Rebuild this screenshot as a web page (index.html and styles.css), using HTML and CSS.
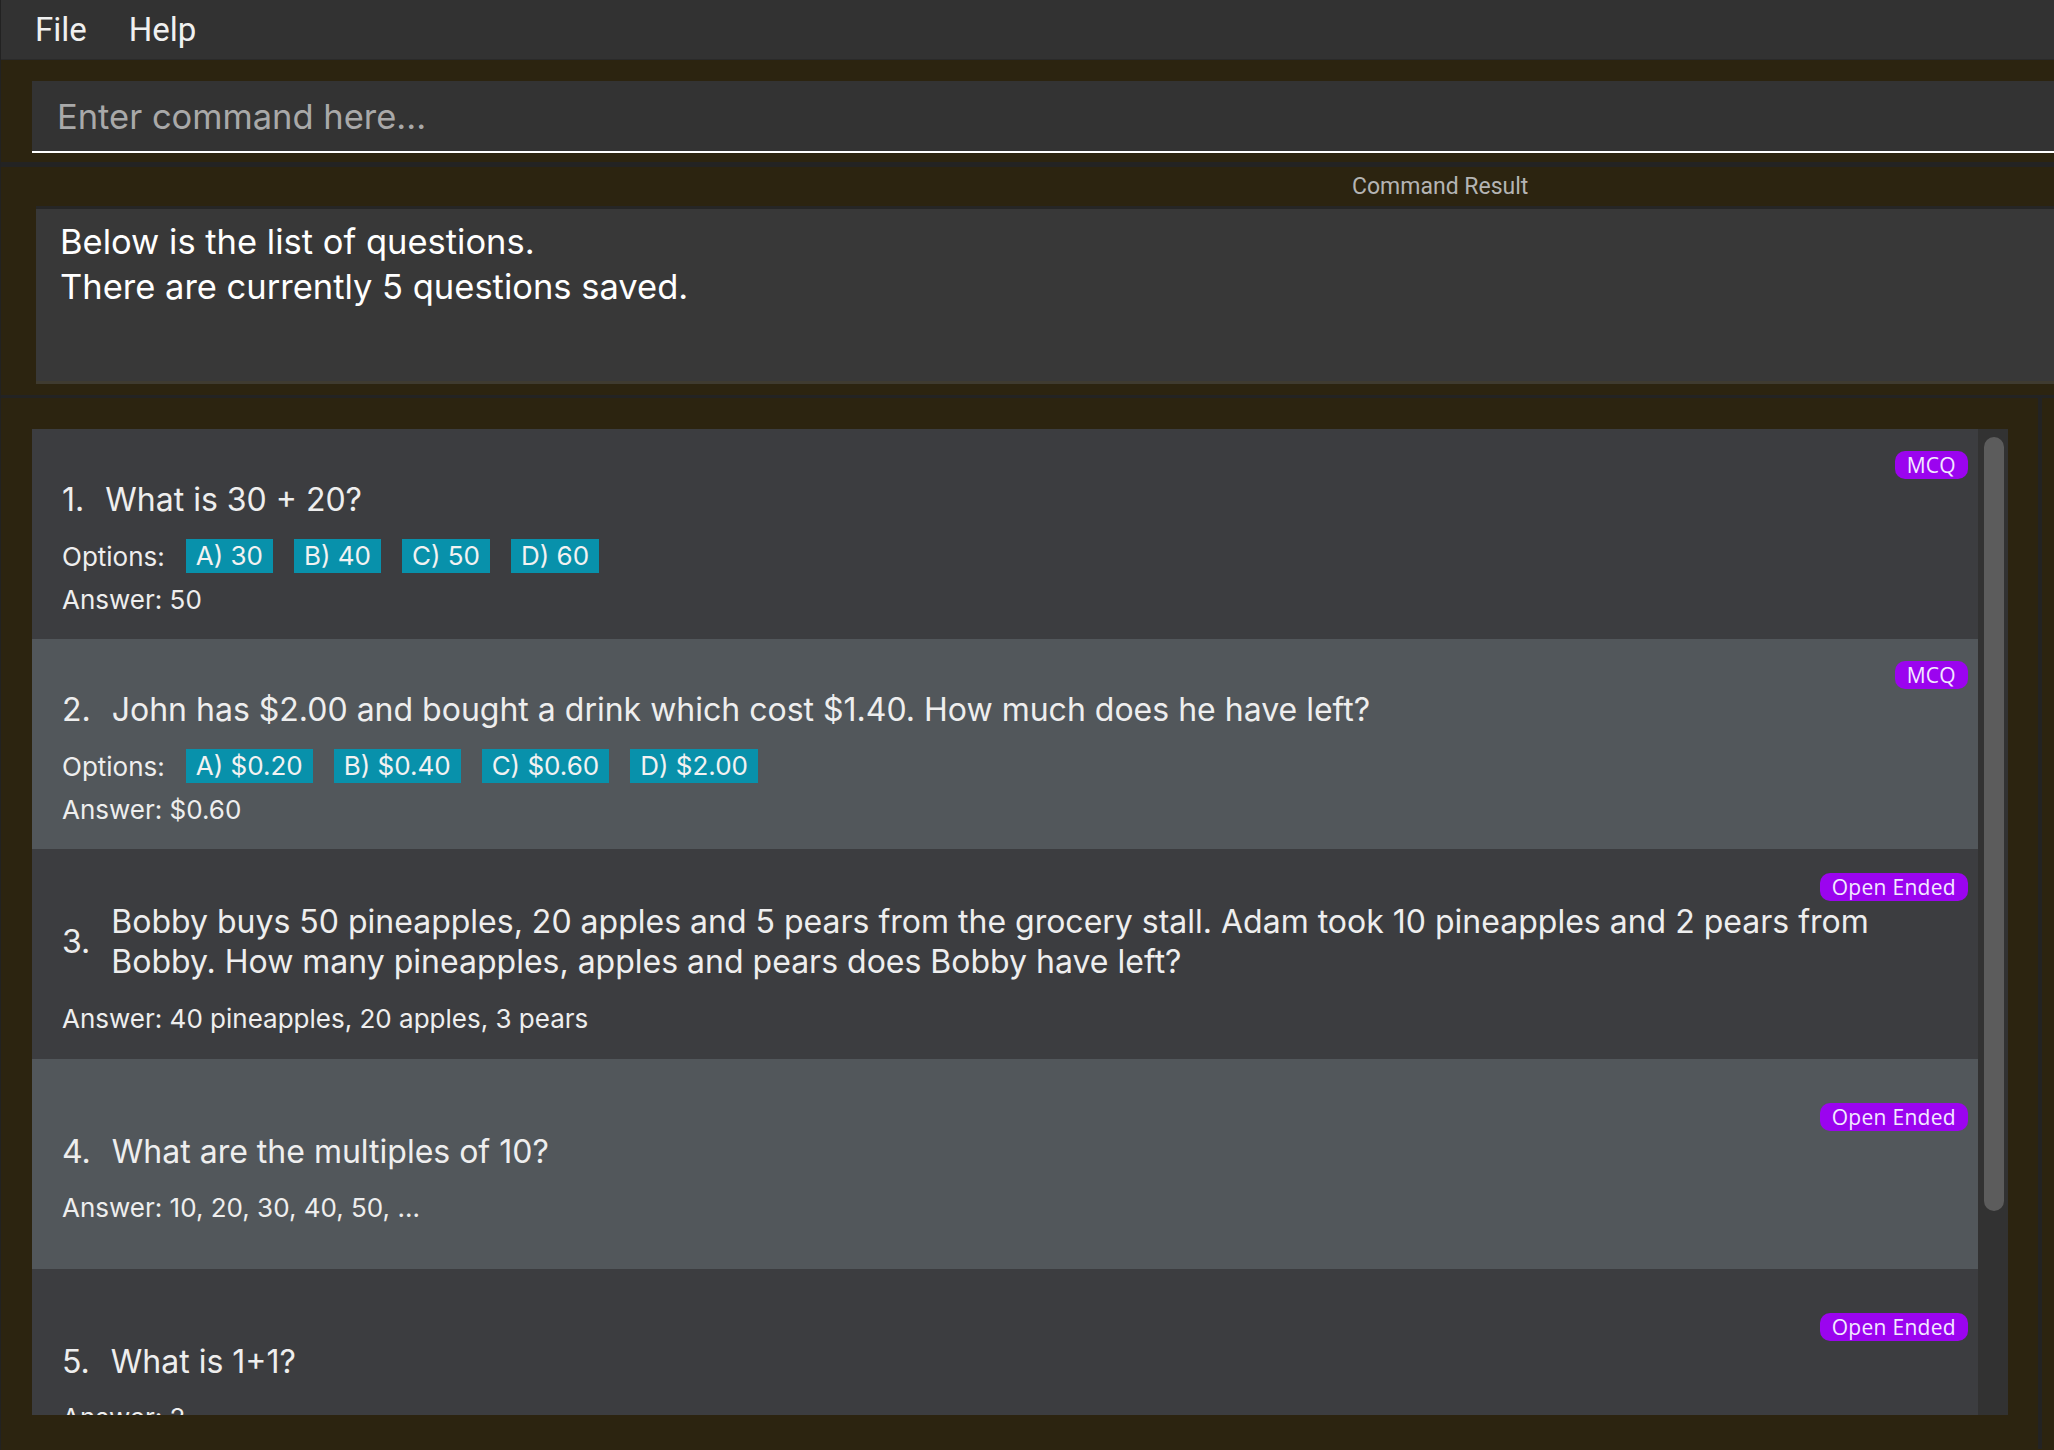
FILE: index.html
```html
<!DOCTYPE html>
<html lang="en">
<head>
<meta charset="utf-8">
<title>Questions</title>
<link rel="stylesheet" href="styles.css">
</head>
<body>
<div class="app">
  <div class="menubar">
    <span class="menu-item">File</span>
    <span class="menu-item">Help</span>
  </div>

  <div class="command-pane">
    <input class="command-input" type="text" placeholder="Enter command here...">
  </div>
  <div class="divider divider-thick"></div>

  <div class="result-pane">
    <div class="result-header">Command Result</div>
    <div class="result-box">
      <div>Below is the list of questions.</div>
      <div>There are currently 5 questions saved.</div>
    </div>
  </div>
  <div class="divider divider-thin"></div>

  <div class="list-pane">
    <div class="list">
      <div class="items">
        <div class="card card-odd">
          <span class="badge">MCQ</span>
          <div class="question"><span class="q-num">1.</span><span class="q-text">What is 30 + 20?</span></div>
          <div class="options">
            <span class="options-label">Options:</span>
            <span class="chip">A) 30</span>
            <span class="chip">B) 40</span>
            <span class="chip">C) 50</span>
            <span class="chip">D) 60</span>
          </div>
          <div class="answer">Answer: 50</div>
        </div>

        <div class="card card-even">
          <span class="badge">MCQ</span>
          <div class="question"><span class="q-num">2.</span><span class="q-text">John has $2.00 and bought a drink which cost $1.40. How much does he have left?</span></div>
          <div class="options">
            <span class="options-label">Options:</span>
            <span class="chip">A) $0.20</span>
            <span class="chip">B) $0.40</span>
            <span class="chip">C) $0.60</span>
            <span class="chip">D) $2.00</span>
          </div>
          <div class="answer">Answer: $0.60</div>
        </div>

        <div class="card card-odd">
          <span class="badge">Open Ended</span>
          <div class="question"><span class="q-num">3.</span><span class="q-text">Bobby buys 50 pineapples, 20 apples and 5 pears from the grocery stall. Adam took 10 pineapples and 2 pears from Bobby. How many pineapples, apples and pears does Bobby have left?</span></div>
          <div class="answer">Answer: 40 pineapples, 20 apples, 3 pears</div>
        </div>

        <div class="card card-even">
          <span class="badge">Open Ended</span>
          <div class="question"><span class="q-num">4.</span><span class="q-text">What are the multiples of 10?</span></div>
          <div class="answer">Answer: 10, 20, 30, 40, 50, ...</div>
        </div>

        <div class="card card-odd">
          <span class="badge">Open Ended</span>
          <div class="question"><span class="q-num">5.</span><span class="q-text">What is 1+1?</span></div>
          <div class="answer">Answer: 2</div>
        </div>
      </div>
      <div class="scroll-track"><div class="scroll-thumb"></div></div>
    </div>
  </div>
</div>
</body>
</html>
```

FILE: styles.css
```css
* { box-sizing: border-box; }

html, body {
  margin: 0;
  padding: 0;
  background: #2c2410;
  overflow: hidden;
}

.app {
  width: 2054px;
  height: 1450px;
  font-family: Inter, Roboto, "Liberation Sans", sans-serif;
  color: #eeeeee;
  border-left: 1px solid #222222;
}

/* Menu */
.menubar {
  height: 60px;
  background: #323232;
  display: flex;
  align-items: center;
  padding-left: 34px;
  gap: 42px;
  border-bottom: 1px solid #2a2a2a;
}
.menu-item {
  font-family: Roboto, "Liberation Sans", sans-serif;
  font-size: 33px;
  color: #f0f0f0;
}

/* Command box */
.command-pane {
  padding: 21px 0 9px 31px;
}
.command-input {
  display: block;
  width: 100%;
  height: 72px;
  margin: 0;
  padding: 0 0 0 25px;
  background: #333333;
  border: none;
  border-bottom: 2px solid #ffffff;
  outline: none;
  font-family: Inter, Roboto, "Liberation Sans", sans-serif;
  font-size: 34.5px;
  color: #ffffff;
}
.command-input::placeholder {
  color: #a9a9a9;
}

.divider { background: #232323; }
.divider-thick { height: 5px; }
.divider-thin { height: 3px; }

/* Result */
.result-pane {
  padding-bottom: 11px;
}
.result-header {
  height: 39px;
  display: flex;
  align-items: center;
  padding-left: 1351px;
  font-family: Roboto, "Liberation Sans", sans-serif;
  font-size: 23px;
  color: #b4b4b4;
}
.result-box {
  margin-left: 35px;
  height: 178px;
  background: #383838;
  border-top: 3px solid #262626;
  border-bottom: 3px solid #3f3b30;
  padding: 10px 0 0 24px;
  font-size: 34.5px;
  line-height: 45px;
  color: #ffffff;
}

/* List */
.list-pane {
  width: 2041px;
  height: 1051px;
  padding: 31px 30px 0 31px;
  border-right: 4px solid #232323;
}
.list {
  height: 986px;
  display: flex;
  overflow: hidden;
}
.items {
  flex: 1;
  overflow: hidden;
}
.card {
  height: 210px;
  display: flex;
  flex-direction: column;
  justify-content: center;
  padding: 0 10px 0 30px;
}
.card-odd { background: #3c3d40; }
.card-even { background: #52575b; }

.badge {
  align-self: flex-end;
  height: 28px;
  line-height: 28px;
  padding: 0 12px;
  border-radius: 10px;
  background: #9b04ef;
  color: #f3eaff;
  font-family: "Open Sans", Roboto, sans-serif;
  font-size: 21px;
  letter-spacing: 0.3px;
}

.question {
  display: flex;
  align-items: center;
  margin-top: 1px;
  margin-bottom: 19px;
  padding-right: 70px;
  font-size: 32px;
  line-height: 40.5px;
  color: #eeeeee;
}
.q-num {
  flex: none;
  margin-right: 21px;
}

.options {
  display: flex;
  align-items: center;
  gap: 21px;
  height: 34px;
  margin-bottom: 10px;
  font-size: 26px;
}
.options-label {
  margin-right: 0;
}
.chip {
  height: 34px;
  line-height: 34px;
  padding: 0 10px;
  background: #0891ab;
  color: #f2f2f2;
}

.answer {
  height: 34px;
  line-height: 34px;
  font-size: 26px;
  color: #eeeeee;
}

.scroll-track {
  width: 30px;
  background: #323232;
  padding: 8px 4px 0 6px;
}
.scroll-thumb {
  width: 20px;
  height: 774px;
  border-radius: 10px;
  background: #5c5c5c;
}
```
